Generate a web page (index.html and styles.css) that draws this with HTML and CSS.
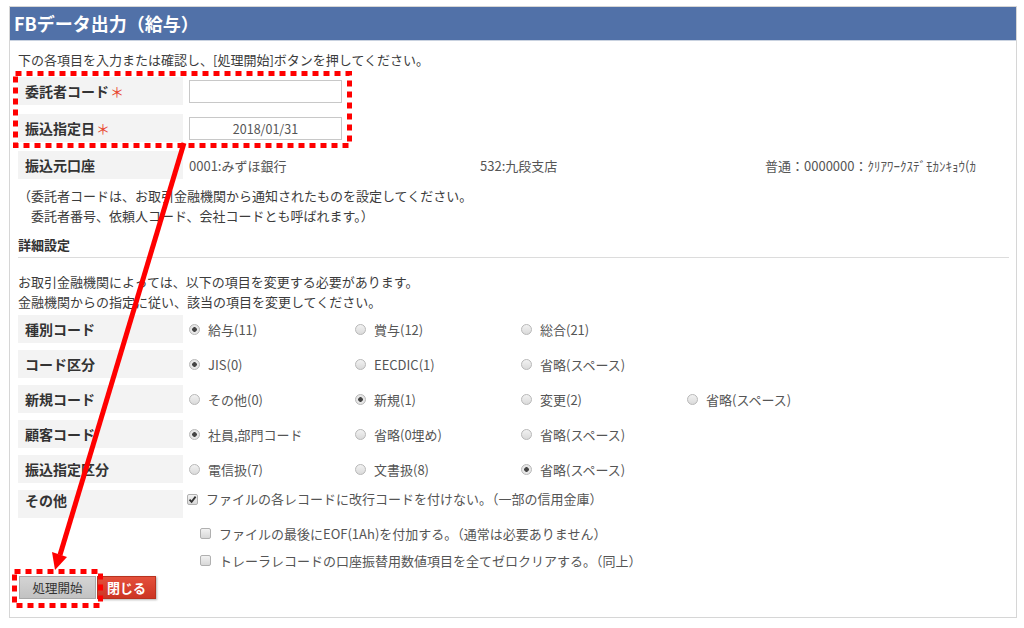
FILE: index.html
```html
<!DOCTYPE html>
<html lang="ja">
<head>
  <meta charset="UTF-8">
  <meta name="viewport" content="width=device-width, initial-scale=1.0">
  <title>FBデータ出力（給与）</title>
  <link rel="stylesheet" href="styles.css">
</head>
<body>
  <div class="panel">
    <h1 class="panel-title">FBデータ出力（給与）</h1>
    <div class="panel-body">
      <p class="lead">下の各項目を入力または確認し、[処理開始]ボタンを押してください。</p>

      <div class="field basic">
        <div class="field-label">委託者コード<span class="req">＊</span></div>
        <div class="field-value"><input type="text" class="text-input" value=""></div>
      </div>
      <div class="field basic">
        <div class="field-label">振込指定日<span class="req">＊</span></div>
        <div class="field-value"><input type="text" class="text-input date" value="2018/01/31"></div>
      </div>
      <div class="field basic">
        <div class="field-label">振込元口座</div>
        <div class="field-value account">
          <span class="acc-bank">0001:みずほ銀行</span>
          <span class="acc-branch">532:九段支店</span>
          <span class="acc-number">普通：0000000：ｸﾘｱﾜｰｸｽﾃﾞﾓｶﾝｷｮｳ(ｶ</span>
        </div>
      </div>

      <p class="note">（委託者コードは、お取引金融機関から通知されたものを設定してください。<br>　委託者番号、依頼人コード、会社コードとも呼ばれます。）</p>

      <h2 class="section-title">詳細設定</h2>
      <p class="note2">お取引金融機関によっては、以下の項目を変更する必要があります。<br>金融機関からの指定に従い、該当の項目を変更してください。</p>

      <div class="field opt-row first">
        <div class="field-label">種別コード</div>
        <div class="field-value">
          <label class="opt"><span class="radio on"></span>給与(11)</label>
          <label class="opt"><span class="radio"></span>賞与(12)</label>
          <label class="opt"><span class="radio"></span>総合(21)</label>
        </div>
      </div>
      <div class="field opt-row">
        <div class="field-label">コード区分</div>
        <div class="field-value">
          <label class="opt"><span class="radio on"></span>JIS(0)</label>
          <label class="opt"><span class="radio"></span>EECDIC(1)</label>
          <label class="opt"><span class="radio"></span>省略(スペース)</label>
        </div>
      </div>
      <div class="field opt-row">
        <div class="field-label">新規コード</div>
        <div class="field-value">
          <label class="opt"><span class="radio"></span>その他(0)</label>
          <label class="opt"><span class="radio on"></span>新規(1)</label>
          <label class="opt"><span class="radio"></span>変更(2)</label>
          <label class="opt"><span class="radio"></span>省略(スペース)</label>
        </div>
      </div>
      <div class="field opt-row">
        <div class="field-label">顧客コード</div>
        <div class="field-value">
          <label class="opt"><span class="radio on"></span>社員,部門コード</label>
          <label class="opt"><span class="radio"></span>省略(0埋め)</label>
          <label class="opt"><span class="radio"></span>省略(スペース)</label>
        </div>
      </div>
      <div class="field opt-row">
        <div class="field-label">振込指定区分</div>
        <div class="field-value">
          <label class="opt"><span class="radio"></span>電信扱(7)</label>
          <label class="opt"><span class="radio"></span>文書扱(8)</label>
          <label class="opt"><span class="radio on"></span>省略(スペース)</label>
        </div>
      </div>
      <div class="field opt-row other">
        <div class="field-label">その他</div>
        <div class="field-value">
          <label class="check-line"><span class="check on"><svg width="9" height="9" viewBox="0 0 9 9"><path d="M1.5 4.6 L3.6 6.8 L7.6 1.6" fill="none" stroke="#333" stroke-width="1.8"/></svg></span>ファイルの各レコードに改行コードを付けない。（一部の信用金庫）</label>
        </div>
      </div>
      <div class="extra-checks">
        <label class="check-line"><span class="check"></span>ファイルの最後にEOF(1Ah)を付加する。（通常は必要ありません）</label>
        <label class="check-line"><span class="check"></span>トレーラレコードの口座振替用数値項目を全てゼロクリアする。（同上）</label>
      </div>

      <div class="actions">
        <button class="btn btn-start">処理開始</button>
        <button class="btn btn-close">閉じる</button>
      </div>
    </div>
  </div>

  <!-- red annotations drawn over the screen -->
  <svg class="annot" width="1024" height="628" viewBox="0 0 1024 628">
    <rect x="15.5" y="73.5" width="334" height="72" fill="none" stroke="#ff0000" stroke-width="5" stroke-dasharray="6 5"/>
    <rect x="14.5" y="571.5" width="86" height="34" fill="none" stroke="#ff0000" stroke-width="5" stroke-dasharray="6 5"/>
    <line x1="184" y1="143" x2="60" y2="555" stroke="#ff0000" stroke-width="5"/>
    <polygon points="55,570 67,557 52,552" fill="#ff0000"/>
  </svg>
</body>
</html>
```

FILE: styles.css
```css
* {
  box-sizing: border-box;
}
body {
  margin: 0;
  font-family: "Noto Sans CJK JP", "Noto Sans", sans-serif;
  font-size: 13px;
  color: #3c3c3c;
  background-color: #fff;
}
.panel {
  margin: 6px 0 0 9px;
  width: 1008px;
  height: 612px;
  border: 1px solid #d6d6d6;
}
.panel-title {
  margin: 0;
  height: 34px;
  padding-left: 4px;
  background-color: #5171a8;
  border-bottom: 1px solid #c9d2e0;
  color: #fff;
  font-size: 18px;
  font-weight: bold;
  line-height: 33px;
}
.panel-body {
  padding: 10px 7px 0 8px;
}
.lead {
  margin: 0;
  line-height: 18px;
}
.field {
  display: flex;
  height: 28px;
}
.field.basic {
  margin-top: 9px;
}
.field.basic:first-of-type {
  margin-top: 8px;
}
.field-label {
  width: 165px;
  flex-shrink: 0;
  display: flex;
  align-items: center;
  padding-left: 7px;
  background-color: #f3f3f3;
  color: #333;
  font-size: 14px;
  font-weight: bold;
}
.req {
  color: #e8442d;
  font-weight: normal;
  margin-left: 1px;
}
.field-value {
  flex: 1;
  display: flex;
  align-items: center;
  margin-left: 6px;
  color: #555;
}
.text-input {
  width: 153px;
  height: 23px;
  padding: 0 4px;
  border: 1px solid #c8c8c8;
  font-family: inherit;
  font-size: 12.5px;
  color: #555;
  outline: none;
}
.text-input.date {
  text-align: center;
}
.account {
  white-space: nowrap;
  overflow: hidden;
}
.acc-bank {
  width: 291px;
  flex-shrink: 0;
}
.acc-branch {
  width: 285px;
  flex-shrink: 0;
}
.acc-number {
  width: 223px;
  flex-shrink: 0;
  overflow: hidden;
}
.note {
  margin: 7px 0 0;
  line-height: 20px;
}
.section-title {
  margin: 9px 0 0;
  padding-bottom: 2px;
  border-bottom: 1px solid #dcdcdc;
  color: #333;
  font-size: 13px;
  font-weight: bold;
  line-height: 20px;
}
.note2 {
  margin: 14px 0 0;
  line-height: 20px;
}
.opt-row {
  margin-top: 7px;
}
.opt-row.first {
  margin-top: 3px;
}
.opt {
  width: 166px;
  display: flex;
  align-items: center;
}
.radio {
  width: 11px;
  height: 11px;
  margin-right: 8px;
  border: 1px solid #b8b8b8;
  border-radius: 50%;
  background: linear-gradient(#f2f2f2, #dadada);
}
.radio.on {
  background: radial-gradient(circle, #444 0 2px, #e6e6e6 2.6px);
}
.other .field-label {
  align-items: flex-start;
  padding-top: 0;
  line-height: 20px;
}
.other .field-value {
  align-items: flex-start;
  line-height: 18px;
}
.check-line {
  display: flex;
  align-items: center;
  height: 18px;
  color: #555;
}
.check {
  width: 11px;
  height: 11px;
  margin-right: 8px;
  border: 1px solid #b0b0b0;
  border-radius: 2px;
  background: linear-gradient(#f2f2f2, #d8d8d8);
  display: flex;
  align-items: center;
  justify-content: center;
}
.other .check {
  margin-left: -2px;
}
.extra-checks {
  margin-left: 182px;
  padding-top: 2px;
}
.extra-checks .check-line {
  height: 27px;
}
.actions {
  display: flex;
  margin-top: 2px;
  margin-left: 1px;
}
.btn {
  height: 23px;
  padding: 0;
  font-family: inherit;
  font-size: 12.5px;
  cursor: pointer;
}
.btn-start {
  width: 77px;
  border: 1px solid #a9a9a9;
  background: linear-gradient(#d4d4d4, #c2c2c2);
  color: #333;
}
.btn-close {
  width: 59px;
  margin-left: 1px;
  border: 1px solid #b8321f;
  background: linear-gradient(#e4503b, #cc3524);
  color: #fff;
  font-weight: bold;
  font-size: 13px;
  box-shadow: 1px 1px 2px rgba(0, 0, 0, 0.3);
}
.annot {
  position: absolute;
  left: 0;
  top: 0;
  pointer-events: none;
}
```
